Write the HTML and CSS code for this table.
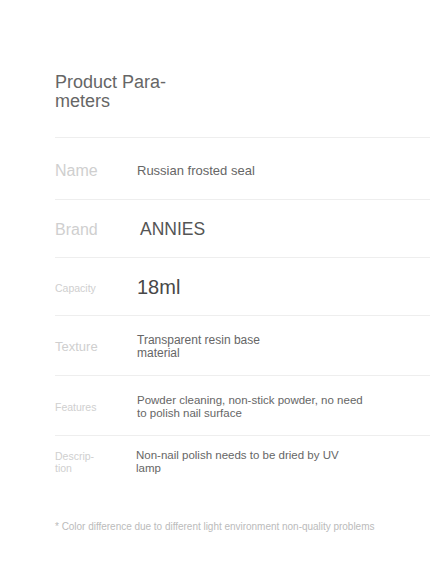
FILE: index.html
```html
<!DOCTYPE html>
<html lang="en">
  <head>
    <meta charset="UTF-8" />
    <meta name="viewport" content="width=device-width, initial-scale=1.0" />
    <title>Product Parameters</title>
    <link rel="stylesheet" href="styles.css">
  </head>
  <body>
    <div class="params">
      <h1 class="title">Product Para-<br>meters</h1>
      <div class="row row-first">
        <span class="label label-lg">Name</span>
        <span class="value">Russian frosted seal</span>
      </div>
      <div class="row">
        <span class="label label-lg">Brand</span>
        <span class="value value-brand">ANNIES</span>
      </div>
      <div class="row">
        <span class="label label-sm">Capacity</span>
        <span class="value value-big">18ml</span>
      </div>
      <div class="row row-mid">
        <span class="label label-md">Texture</span>
        <span class="value value-md">Transparent resin base<br>material</span>
      </div>
      <div class="row row-mid">
        <span class="label label-sm">Features</span>
        <span class="value value-sm">Powder cleaning, non-stick powder, no need<br>to polish nail surface</span>
      </div>
      <div class="row row-last">
        <span class="label label-sm">Descrip-<br>tion</span>
        <span class="value value-sm value-left">Non-nail polish needs to be dried by UV<br>lamp</span>
      </div>
      <p class="note">* Color difference due to different light environment non-quality problems</p>
    </div>
  </body>
</html>
```

FILE: styles.css
```css
body {
  margin: 0;
  background: #fff;
  font-family: "Liberation Sans", Arial, sans-serif;
}
.params {
  padding: 73px 0 40px 55px;
}
.title {
  margin: 0 0 26px;
  font-size: 18px;
  line-height: 19px;
  font-weight: normal;
  color: #666;
}
.row {
  display: flex;
  align-items: center;
  height: 58px;
  border-top: 1px solid #eee;
  padding-top: 2px;
  box-sizing: border-box;
}
.row-first {
  height: 62px;
  padding-top: 4px;
}
.row-mid {
  height: 60px;
}
.row-last {
  padding-top: 0;
  padding-bottom: 6px;
}
.label {
  width: 82px;
  flex-shrink: 0;
  color: #cfcfcf;
}
.label-lg {
  font-size: 16px;
}
.label-md {
  font-size: 13px;
}
.label-sm {
  font-size: 10.5px;
  line-height: 12px;
}
.value {
  font-size: 13px;
  color: #666;
}
.value-brand {
  font-size: 17.5px;
  color: #555;
  padding-left: 3px;
}
.value-big {
  font-size: 20px;
  color: #484848;
}
.value-md {
  font-size: 12px;
  line-height: 13px;
}
.value-sm {
  font-size: 11.5px;
  line-height: 13px;
}
.value-left {
  margin-left: -1px;
}
.note {
  margin: 28px 0 0;
  font-size: 10px;
  letter-spacing: -0.02px;
  color: #bbb;
}
```
